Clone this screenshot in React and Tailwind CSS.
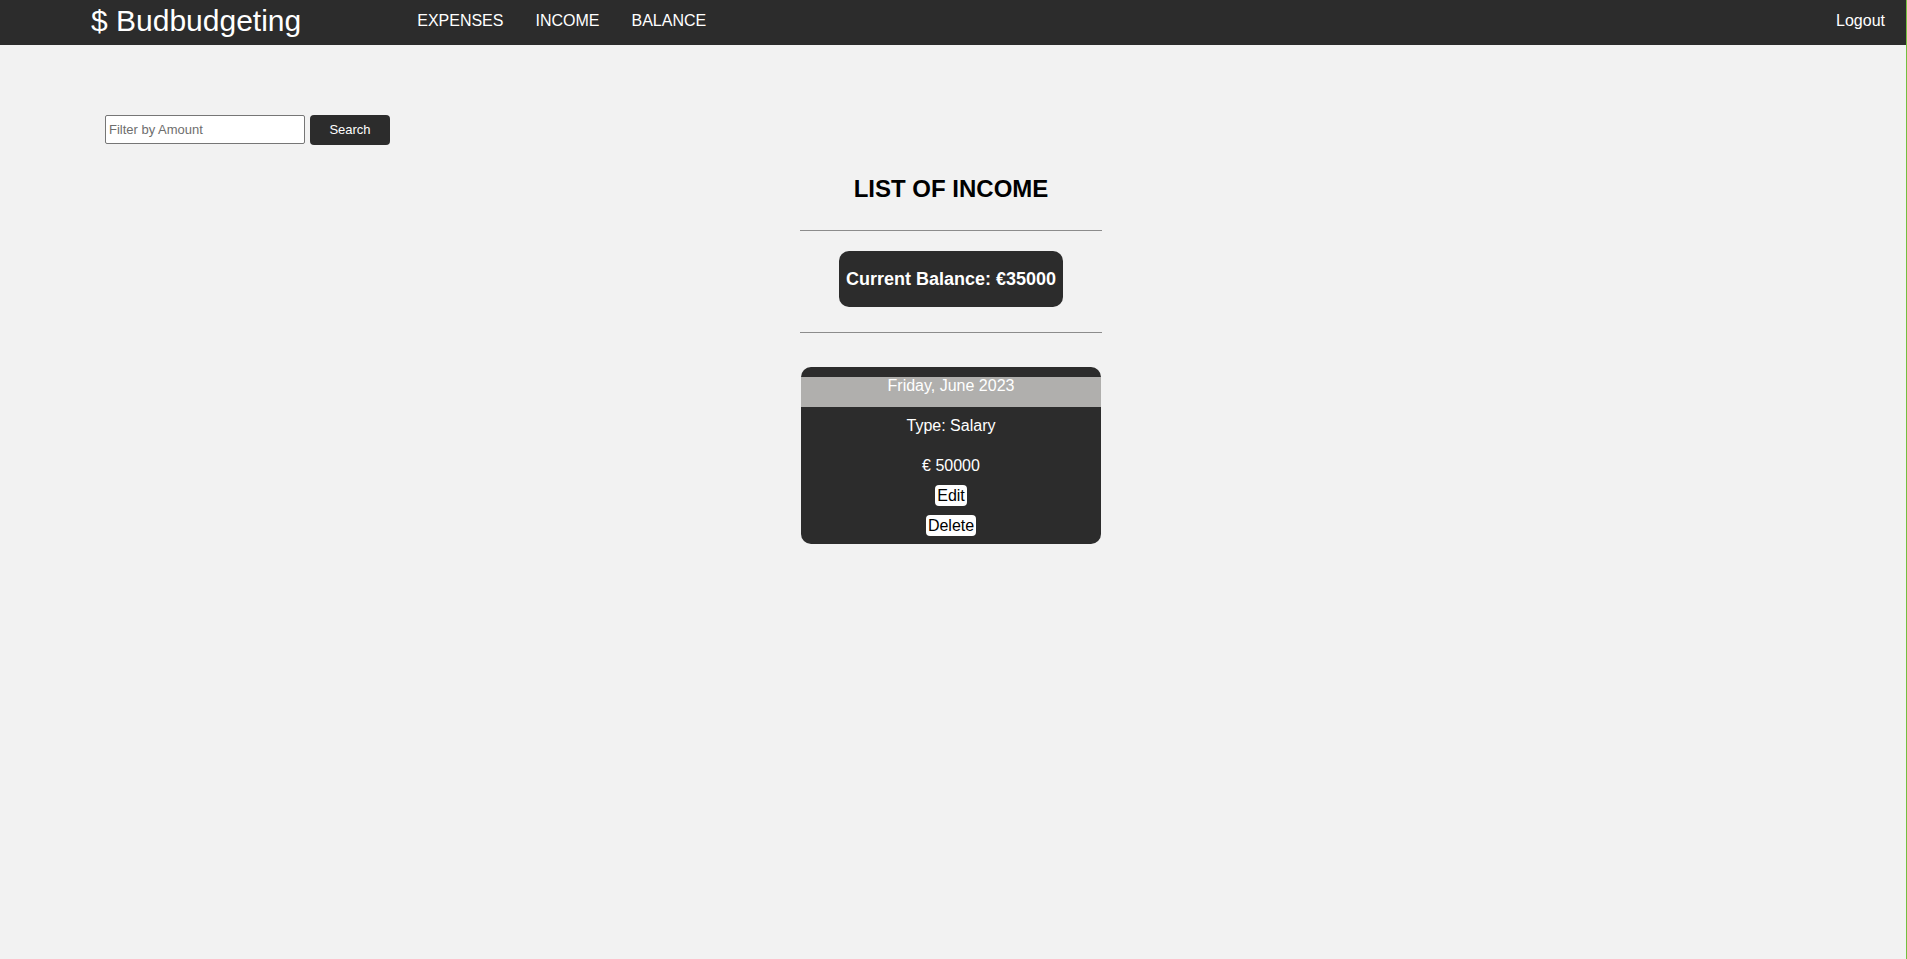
import { useState } from "react";

const incomes = [
    { id: 1, date: "Friday, June 2023", type: "Salary", amount: 50000 },
];

const Navbar = () => (
    <header className="h-[45px] bg-[#2c2c2c] flex items-center pb-[3px] text-white">
        <a href="#" className="ml-[91px] text-[30px] leading-[34px] whitespace-nowrap">$ Budbudgeting</a>
        <nav className="ml-[116px] flex gap-[32px] text-[16px] leading-[18px]">
            <a href="#">EXPENSES</a>
            <a href="#">INCOME</a>
            <a href="#">BALANCE</a>
        </nav>
        <a href="#" className="ml-auto mr-[21px] text-[16px] leading-[18px]">Logout</a>
    </header>
);

const IncomeCard = ({ item }) => (
    <div className="w-[300px] bg-[#2c2c2c] rounded-[10px] pt-[10px] pb-[8px] flex flex-col items-center text-white text-[16px] leading-[18px]">
        <div className="w-full h-[30px] bg-[#b0afad] text-center">{item.date}</div>
        <p className="mt-[10px]">Type: {item.type}</p>
        <p className="mt-[22px]">€ {item.amount}</p>
        <button className="mt-[10px] bg-white text-black rounded-[4px] px-[2.5px] py-[1.5px] leading-[18px]">Edit</button>
        <button className="mt-[9px] bg-white text-black rounded-[4px] px-[2px] py-[1.5px] leading-[18px]">Delete</button>
    </div>
);

export default function App() {
    const [filter, setFilter] = useState("");
    const list = incomes.filter((i) => !filter || String(i.amount).includes(filter));

    return (
        <div className="min-h-screen bg-[#f2f2f2] border-r border-[#74bf3f] font-['Liberation_Sans',Arial,sans-serif]">
            <Navbar />
            <main className="pr-[4px]">
                <div className="mt-[70px] ml-[105px] flex items-start gap-[5px]">
                    <input
                        value={filter}
                        onChange={(e) => setFilter(e.target.value)}
                        placeholder="Filter by Amount"
                        className="w-[200px] h-[29px] border border-[#767676] rounded-[2px] bg-white px-[3px] text-[13px] placeholder:text-[#6e6e6e] outline-none"
                    />
                    <button className="w-[80px] h-[30px] bg-[#2c2c2c] text-white text-[13px] rounded-[4px]">Search</button>
                </div>

                <div className="flex flex-col items-center">
                    <h1 className="mt-[30px] text-[24px] leading-[28px] font-bold text-black">LIST OF INCOME</h1>
                    <hr className="mt-[27px] w-[302px] border-0 border-t border-[#8c8c8c]" />
                    <div className="mt-[20px] w-[224px] h-[56px] rounded-[10px] bg-[#2c2c2c] flex items-center justify-center">
                        <h3 className="text-white text-[18px] leading-[21px] font-bold whitespace-nowrap">Current Balance: €35000</h3>
                    </div>
                    <hr className="mt-[25px] w-[302px] border-0 border-t border-[#8c8c8c]" />
                    <div className="mt-[34px] flex flex-col gap-4">
                        {list.map((item) => (
                            <IncomeCard key={item.id} item={item} />
                        ))}
                    </div>
                </div>
            </main>
        </div>
    );
}
